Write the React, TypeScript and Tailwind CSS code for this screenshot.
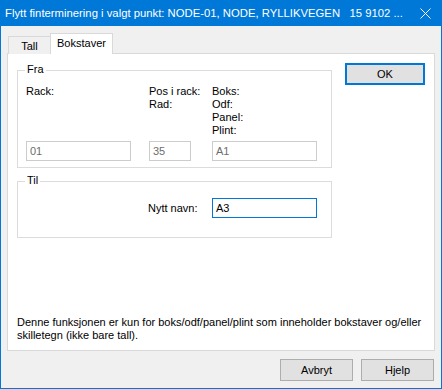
import React from "react";

const font = { fontFamily: '"Liberation Sans", Arial, sans-serif' };

function GroupBox({
  title,
  className,
  children,
}: {
  title: string;
  className?: string;
  children: React.ReactNode;
}) {
  return (
    <div className={["relative border border-[#dcdcdc]", className].join(" ")}>
      <span className="absolute -top-[8px] left-[7px] bg-white px-[2px] leading-[13px]">
        {title}
      </span>
      {children}
    </div>
  );
}

function TextBox({
  value,
  width,
  focused,
}: {
  value: string;
  width: string;
  focused?: boolean;
}) {
  return (
    <div
      className={[
        "flex h-[20px] items-center bg-white px-[3px] leading-[13px]",
        width,
        focused
          ? "border border-[#0078d7] text-black"
          : "border border-[#cccccc] text-[#6d6d6d]",
      ].join(" ")}
    >
      {value}
    </div>
  );
}

export default function App() {
  return (
    <div
      className="flex h-[389px] w-[442px] flex-col border-x border-b border-[#0078d7] bg-[#f0f0f0] text-[11px] text-black"
      style={font}
    >
      {/* title bar */}
      <div className="-mx-px flex h-[26px] shrink-0 items-center justify-between overflow-hidden bg-[#0078d7] pl-[5px] pr-[11px] text-white">
        <span className="whitespace-nowrap text-[11.3px]">
          Flytt finterminering i valgt punkt: NODE-01, NODE, RYLLIKVEGEN&nbsp;&nbsp;&nbsp;15 9102 ...
        </span>
        <svg className="shrink-0" width="11" height="11" viewBox="0 0 11 11" aria-hidden>
          <path d="M0.5 0.5 L10.5 10.5 M10.5 0.5 L0.5 10.5" stroke="white" strokeWidth="1" />
        </svg>
      </div>

      <div className="flex flex-1 flex-col px-[6px] pt-[7px]">
        {/* tabs */}
        <div className="relative z-10 -mb-px flex h-[21px] items-end pl-[1px]">
          <div className="flex h-[18px] w-[43px] items-center justify-center border border-b-0 border-[#d9d9d9] bg-[#f0f0f0] pt-[1px]">
            Tall
          </div>
          <div className="-ml-px flex h-[21px] w-[63px] items-center justify-center border border-b-0 border-[#d9d9d9] bg-white pb-[1px]">
            Bokstaver
          </div>
        </div>

        {/* tab page */}
        <div className="relative flex h-[298px] flex-col border border-[#d9d9d9] bg-white pl-[9px]">
          <div className="flex items-start">
            <div className="mt-[16px] flex flex-col">
              <GroupBox title="Fra" className="h-[98px] w-[315px] pl-[8px] pt-[14px]">
                <div className="flex leading-[13px]">
                  <div className="w-[123px]">
                    <div>Rack:</div>
                  </div>
                  <div className="w-[63px]">
                    <div>Pos i rack:</div>
                    <div>Rad:</div>
                  </div>
                  <div>
                    <div>Boks:</div>
                    <div>Odf:</div>
                    <div>Panel:</div>
                    <div>Plint:</div>
                  </div>
                </div>
                <div className="mt-[4px] flex">
                  <div className="w-[123px]">
                    <TextBox value="01" width="w-[105px]" />
                  </div>
                  <div className="w-[63px]">
                    <TextBox value="35" width="w-[42px]" />
                  </div>
                  <TextBox value="A1" width="w-[105px]" />
                </div>
              </GroupBox>

              <GroupBox title="Til" className="mt-[13px] h-[57px] w-[315px]">
                <div className="flex items-center pl-[130px] pt-[16px]">
                  <div className="w-[64px] leading-[13px]">Nytt navn:</div>
                  <TextBox value="A3" width="w-[105px]" focused />
                </div>
              </GroupBox>
            </div>

            <button
              type="button"
              className="ml-[13px] mt-[9px] flex h-[22px] w-[80px] items-center justify-center border-2 border-[#0078d7] bg-[#e1e1e1]"
            >
              OK
            </button>
          </div>

          <p className="mt-[78px] leading-[13px]">
            Denne funksjonen er kun for boks/odf/panel/plint som inneholder bokstaver og/eller
            <br />
            skilletegn (ikke bare tall).
          </p>
        </div>

        {/* buttons */}
        <div className="mt-[8px] flex justify-end gap-[8px] pr-px">
          <button
            type="button"
            className="flex h-[22px] w-[73px] items-center justify-center border border-[#adadad] bg-[#e1e1e1]"
          >
            Avbryt
          </button>
          <button
            type="button"
            className="flex h-[22px] w-[73px] items-center justify-center border border-[#adadad] bg-[#e1e1e1]"
          >
            Hjelp
          </button>
        </div>
      </div>
    </div>
  );
}
